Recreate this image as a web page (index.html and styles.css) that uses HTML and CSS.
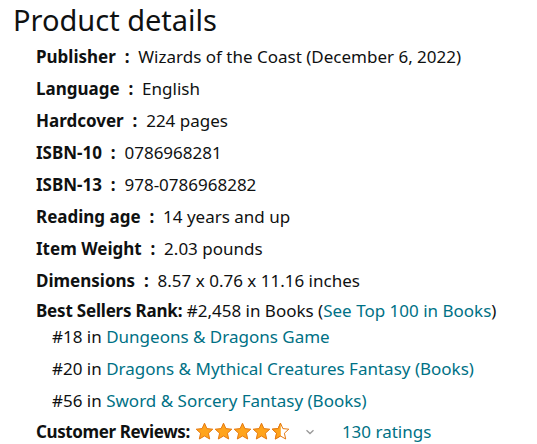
FILE: index.html
```html
<!DOCTYPE html>
<html>
<head>
<meta charset="utf-8">
<link rel="stylesheet" href="styles.css">
</head>
<body>
<div class="details">
  <h2 class="title">Product details</h2>
  <ul class="list">
    <li class="row"><span class="label">Publisher&nbsp; : &nbsp;</span><span>Wizards of the Coast (December 6, 2022)</span></li>
    <li class="row"><span class="label">Language&nbsp; : &nbsp;</span><span>English</span></li>
    <li class="row"><span class="label">Hardcover&nbsp; : &nbsp;</span><span>224 pages</span></li>
    <li class="row"><span class="label">ISBN-10&nbsp; : &nbsp;</span><span>0786968281</span></li>
    <li class="row"><span class="label">ISBN-13&nbsp; : &nbsp;</span><span>978-0786968282</span></li>
    <li class="row"><span class="label">Reading age&nbsp; : &nbsp;</span><span>14 years and up</span></li>
    <li class="row"><span class="label">Item Weight&nbsp; : &nbsp;</span><span>2.03 pounds</span></li>
    <li class="row"><span class="label">Dimensions&nbsp; : &nbsp;</span><span>8.57 x 0.76 x 11.16 inches</span></li>
  </ul>
  <ul class="list rank">
    <li class="rank-main"><span class="label tight">Best Sellers Rank:</span> #2,458 in Books (<a class="link" href="#">See Top 100 in Books</a>)
      <ul class="sub">
        <li class="sub-first">#18 in <a class="link" href="#">Dungeons &amp; Dragons Game</a></li>
        <li>#20 in <a class="link" href="#">Dragons &amp; Mythical Creatures Fantasy (Books)</a></li>
        <li>#56 in <a class="link" href="#">Sword &amp; Sorcery Fantasy (Books)</a></li>
      </ul>
    </li>
  </ul>
  <ul class="list reviews-list">
    <li class="reviews"><span class="label tighter">Customer Reviews:</span>
      <span class="stars" aria-label="4.5 out of 5 stars">
        <svg width="98" height="20" viewBox="0 0 98 20">
          <defs>
            <path id="st" d="M9.5 1.2 L11.9 6.6 L17.8 7.2 L13.4 11.2 L14.7 17 L9.5 14 L4.3 17 L5.6 11.2 L1.2 7.2 L7.1 6.6 Z" stroke-linejoin="round"/>
            <clipPath id="half"><rect x="0" y="0" width="9.8" height="20"/></clipPath>
          </defs>
          <use href="#st" x="0" fill="#FFA41C" stroke="#E47911" stroke-width="1"/>
          <use href="#st" x="19" fill="#FFA41C" stroke="#E47911" stroke-width="1"/>
          <use href="#st" x="38" fill="#FFA41C" stroke="#E47911" stroke-width="1"/>
          <use href="#st" x="57" fill="#FFA41C" stroke="#E47911" stroke-width="1"/>
          <use href="#st" x="76" fill="#fff" stroke="#E47911" stroke-width="1"/>
          <g clip-path="url(#half)" transform="translate(76 0)"><use href="#st" fill="#FFA41C" stroke="#E47911" stroke-width="1"/></g>
        </svg>
      </span>
      <svg class="chev" width="10" height="6" viewBox="0 0 10 6"><path d="M1.5 1.2 L5 4.5 L8.5 1.2" fill="none" stroke="#999" stroke-width="1.3"/></svg>
      <a class="link ratings" href="#">130 ratings</a>
    </li>
  </ul>
</div>
</body>
</html>
```

FILE: styles.css
```css
html, body {
  margin: 0;
  padding: 0;
  background: #fff;
}
body {
  font-family: "Noto Sans", "Open Sans", Arial, sans-serif;
  color: #0F1111;
  font-size: 17px;
}
.details {
  padding: 0 0 0 13px;
}
.title {
  margin: 0 0 1px;
  font-weight: 400;
  font-size: 29px;
  line-height: 40px;
}
.list {
  list-style: none;
  margin: 0;
  padding: 0 0 0 23px;
}
.row {
  line-height: 20px;
  padding: 6px 0;
}
.label {
  font-weight: 700;
}
.label.tight {
  letter-spacing: -0.2px;
}
.label.tighter {
  letter-spacing: -0.4px;
}
.link {
  color: #007185;
  text-decoration: none;
}
.rank-main {
  line-height: 20px;
  padding: 4px 0 6px;
}
.sub {
  list-style: none;
  margin: 0;
  padding: 0 0 0 16px;
}
.sub li {
  padding-top: 12px;
}
.sub li.sub-first {
  padding-top: 6px;
}
.reviews {
  display: flex;
  align-items: center;
  line-height: 20px;
  padding: 5px 0 4px;
}
.stars {
  display: inline-flex;
  margin-left: 5px;
}
.chev {
  margin-left: 12px;
  margin-right: 27px;
}
```
